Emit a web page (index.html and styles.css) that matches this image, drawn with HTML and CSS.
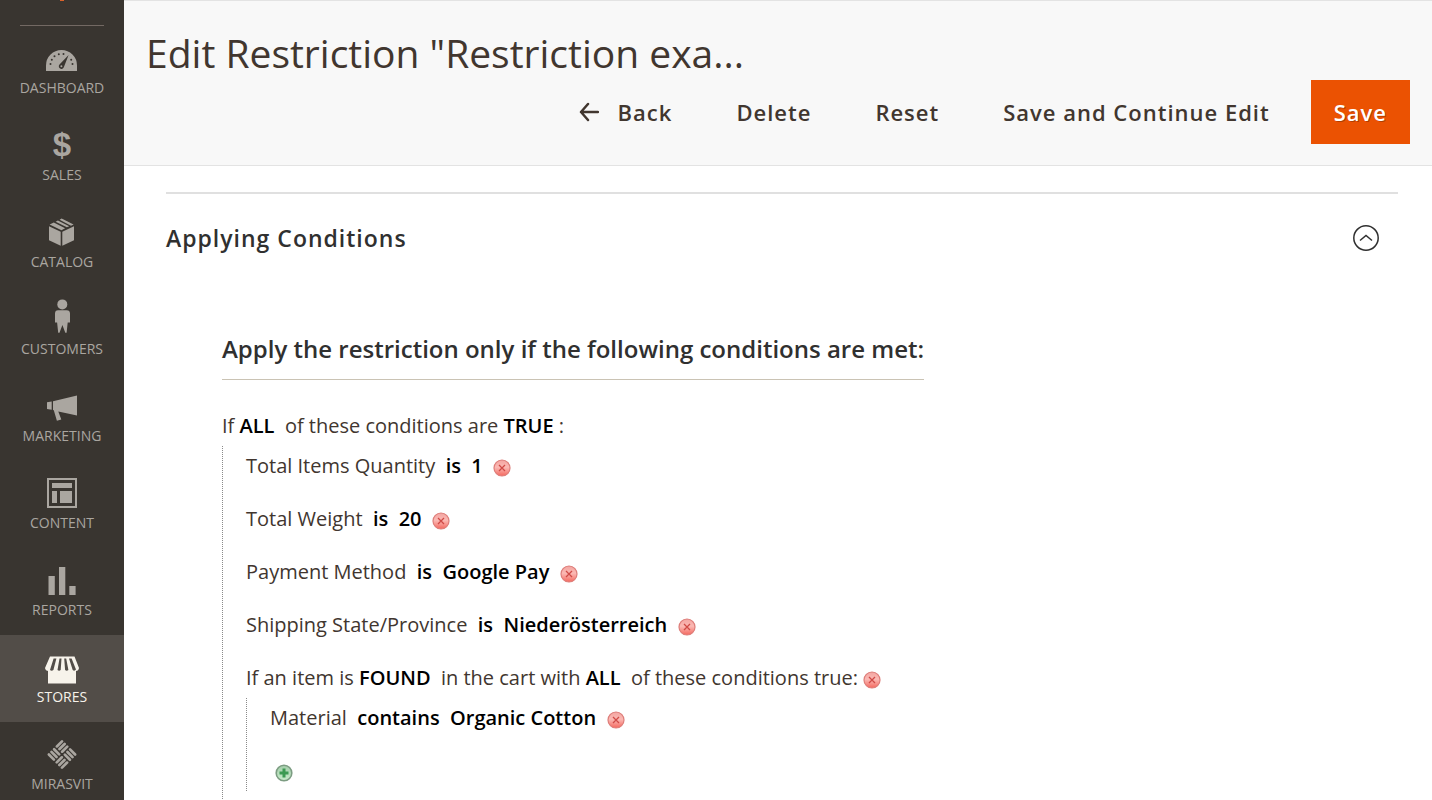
FILE: index.html
```html
<!DOCTYPE html>
<html lang="en">
<head>
    <meta charset="UTF-8">
    <meta name="viewport" content="width=device-width, initial-scale=1.0">
    <title>Edit Restriction</title>
    <link rel="stylesheet" href="styles.css">
</head>
<body>

    <!-- shared icons -->
    <svg class="sprite" aria-hidden="true">
        <defs>
            <linearGradient id="red-fill" x1="0" y1="0" x2="0" y2="1">
                <stop offset="0" stop-color="#f3a5a1"/>
                <stop offset="0.45" stop-color="#fbb9b4"/>
                <stop offset="1" stop-color="#f4685f"/>
            </linearGradient>
            <linearGradient id="green-fill" x1="0" y1="0" x2="0" y2="1">
                <stop offset="0" stop-color="#a3cdaa"/>
                <stop offset="1" stop-color="#c9eccb"/>
            </linearGradient>
        </defs>
        <symbol id="icon-remove" viewBox="0 0 18 18">
            <circle cx="9" cy="9" r="8" fill="url(#red-fill)" stroke="#dd7d79" stroke-width="1.2"/>
            <path d="M6 6l6 6M12 6l-6 6" stroke="#cf4a46" stroke-width="1.3" fill="none"/>
        </symbol>
        <symbol id="icon-add" viewBox="0 0 18 18">
            <circle cx="9" cy="9" r="7.8" fill="url(#green-fill)" stroke="#7c9c82" stroke-width="1.6"/>
            <path d="M9 4.5v9M4.5 9h9" stroke="#3c9a52" stroke-width="3" fill="none"/>
        </symbol>
    </svg>

    <div class="page">
        <nav class="menu">
            <div class="menu__logo"><span class="menu__logo-tip"></span></div>
            <a href="#" class="menu__item">
                <svg class="menu__icon" viewBox="0 0 34 40" aria-hidden="true">
                    <path d="M1 33V27.500a15.500 15.500 0 0 1 31 0V33z" fill="currentColor"/>
                    <g class="menu__cut">
                        <circle cx="5.500" cy="26" r="1"/><circle cx="6.800" cy="21.800" r="1"/><circle cx="9.500" cy="18.300" r="1"/>
                        <circle cx="13.800" cy="16.200" r="1"/><circle cx="18.500" cy="15.900" r="1"/><circle cx="26.200" cy="21.800" r="1"/><circle cx="27.500" cy="26" r="1"/>
                        <path d="M23.600 17L18.900 29a2.600 2.600 0 1 1-4.400-2.500z"/>
                    </g>
                    <circle cx="16.400" cy="28.200" r="1" fill="currentColor"/>
                </svg>
                <span class="menu__label">DASHBOARD</span>
            </a>
            <a href="#" class="menu__item">
                <svg class="menu__icon" viewBox="0 0 34 40" aria-hidden="true">
                    <text class="menu__dollar" x="17" y="31" text-anchor="middle">$</text>
                </svg>
                <span class="menu__label">SALES</span>
            </a>
            <a href="#" class="menu__item">
                <svg class="menu__icon" viewBox="0 0 34 40" aria-hidden="true">
                    <path d="M4 14.200l11.700 5.600v14L4 28.200zM17.300 19.800L29 14.200v14l-11.700 5.600z" fill="currentColor"/>
                    <path d="M4.600 12.600l4.200-2 11.300 5.600-3.600 2zM10.600 9.700l2.300-1.100 11.300 5.600-2.300 1.100zM14.600 7.700l2-1.200 12 6.100-2.600 1.200z" fill="currentColor"/>
                </svg>
                <span class="menu__label">CATALOG</span>
            </a>
            <a href="#" class="menu__item">
                <svg class="menu__icon" viewBox="0 0 34 40" aria-hidden="true">
                    <circle cx="17.300" cy="5.400" r="5" fill="currentColor"/>
                    <path d="M13 11.200h8.600q3.400 0 3.400 3.400V23.500h-2.300l-1.100 10.300h-1.300L17.400 26l-2.900 7.800h-1.300L12.100 23.500H10V14.600q0-3.400 3-3.400z" fill="currentColor"/>
                </svg>
                <span class="menu__label">CUSTOMERS</span>
            </a>
            <a href="#" class="menu__item">
                <svg class="menu__icon" viewBox="0 0 34 40" aria-hidden="true">
                    <path d="M2 16.300l4.700-.8v8.200L2 23zM8 15.200L32 9.500v20L13.300 25.600l3 7.900-4.400 1.200L8.800 24.200 8 24z" fill="currentColor"/>
                </svg>
                <span class="menu__label">MARKETING</span>
            </a>
            <a href="#" class="menu__item">
                <svg class="menu__icon" viewBox="0 0 34 40" aria-hidden="true">
                    <path d="M3 6h28v28H3z" fill="none" stroke="currentColor" stroke-width="2"/>
                    <path d="M7 10h20v5H7zM7 18h5v12H7zM15 18h12v12H15z" fill="currentColor"/>
                </svg>
                <span class="menu__label">CONTENT</span>
            </a>
            <a href="#" class="menu__item">
                <svg class="menu__icon" viewBox="0 0 34 40" aria-hidden="true">
                    <path d="M3.500 16h6.300v19H3.500zM14 7h6.300v28H14zM24.300 26h6.300v9h-6.300z" fill="currentColor"/>
                </svg>
                <span class="menu__label">REPORTS</span>
            </a>
            <a href="#" class="menu__item menu__item--active">
                <svg class="menu__icon" viewBox="0 0 34 40" aria-hidden="true">
                    <path d="M3 21h28v15.500H3zM5 9.500h24.500L34 21q-.5 3-3 3H3.500Q.5 24 0 21z" fill="currentColor"/>
                    <path class="menu__cut" d="M8.600 11.500h2.800L8.400 23q-1.800 1.500-3.400 0zM14.500 11.500h2l-.8 11.500q-1.600 1.500-3.200 0zM19.200 11.500h2l2.200 11.500q-1.700 1.500-3.300 0zM24 11.500h2.600L31 22.500q-1.500 2-3.300.5z"/>
                </svg>
                <span class="menu__label">STORES</span>
            </a>
            <a href="#" class="menu__item">
                <svg class="menu__icon" viewBox="0 0 34 40" aria-hidden="true">
                    <g transform="translate(17 20.500) rotate(45)" fill="none" stroke="currentColor" stroke-width="2.700" stroke-linecap="round">
                        <path d="M-9.300-9.300v7.200M-5.600-9.300v7.200M-1.900-9.300v7.200M1.900 2.100v7.200M5.600 2.100v7.200M9.300 2.100v7.200"/>
                        <path d="M2.100-9.300h7.200M2.100-5.600h7.200M2.100-1.900h7.200M-9.300 1.900h7.200M-9.300 5.600h7.200M-9.300 9.300h7.200"/>
                    </g>
                </svg>
                <span class="menu__label">MIRASVIT</span>
            </a>
        </nav>

        <main class="main">
            <header class="header">
                <h1 class="header__title">Edit Restriction "Restriction exa...</h1>
                <div class="header__actions">
                    <button type="button" class="button">
                        <svg class="button__arrow" viewBox="0 0 20 20" aria-hidden="true">
                            <path d="M9 2L2 10l7 8M2 10h17" fill="none" stroke="currentColor" stroke-width="2.500" stroke-linecap="round" stroke-linejoin="round"/>
                        </svg>
                        Back
                    </button>
                    <button type="button" class="button">Delete</button>
                    <button type="button" class="button">Reset</button>
                    <button type="button" class="button">Save and Continue Edit</button>
                    <button type="button" class="button button--primary">Save</button>
                </div>
            </header>

            <section class="section">
                <div class="section__head">
                    <h2 class="section__title">Applying Conditions</h2>
                    <button type="button" class="section__toggle" aria-label="Collapse">
                        <svg viewBox="0 0 28 28" aria-hidden="true">
                            <circle cx="14" cy="14" r="12.200"/>
                            <path d="M8 16.500l6-5 6 5"/>
                        </svg>
                    </button>
                </div>

                <div class="rules">
                    <h3 class="rules__legend">Apply the restriction only if the following conditions are met:</h3>
                    <div class="rules__line">If <a href="#">ALL</a>&nbsp; of these conditions are <a href="#">TRUE</a> :</div>
                    <ul class="rules__list">
                        <li class="rules__item">
                            <div class="rules__line">Total Items Quantity&nbsp; <a href="#">is</a>&nbsp; <a href="#">1</a>&nbsp; <button type="button" class="rules__button" aria-label="Remove"><svg><use href="#icon-remove"/></svg></button></div>
                        </li>
                        <li class="rules__item">
                            <div class="rules__line">Total Weight&nbsp; <a href="#">is</a>&nbsp; <a href="#">20</a>&nbsp; <button type="button" class="rules__button" aria-label="Remove"><svg><use href="#icon-remove"/></svg></button></div>
                        </li>
                        <li class="rules__item">
                            <div class="rules__line">Payment Method&nbsp; <a href="#">is</a>&nbsp; <a href="#">Google Pay</a>&nbsp; <button type="button" class="rules__button" aria-label="Remove"><svg><use href="#icon-remove"/></svg></button></div>
                        </li>
                        <li class="rules__item">
                            <div class="rules__line">Shipping State/Province&nbsp; <a href="#">is</a>&nbsp; <a href="#">Niederösterreich</a>&nbsp; <button type="button" class="rules__button" aria-label="Remove"><svg><use href="#icon-remove"/></svg></button></div>
                        </li>
                        <li class="rules__item">
                            <div class="rules__line">If an item is <a href="#">FOUND</a>&nbsp; in the cart with <a href="#">ALL</a>&nbsp; of these conditions true: <button type="button" class="rules__button" aria-label="Remove"><svg><use href="#icon-remove"/></svg></button></div>
                            <ul class="rules__list">
                                <li class="rules__item">
                                    <div class="rules__line">Material&nbsp; <a href="#">contains</a>&nbsp; <a href="#">Organic Cotton</a>&nbsp; <button type="button" class="rules__button" aria-label="Remove"><svg><use href="#icon-remove"/></svg></button></div>
                                </li>
                                <li class="rules__item">
                                    <div class="rules__line">&nbsp;<button type="button" class="rules__button" aria-label="Add"><svg><use href="#icon-add"/></svg></button></div>
                                </li>
                            </ul>
                        </li>
                    </ul>
                </div>
            </section>
        </main>
    </div>

</body>
</html>
```
FILE: styles.css
```css
* {
    box-sizing: border-box;
}

body {
    margin: 0;
    background: #fff;
    color: #41362f;
    font-family: "Open Sans", "Noto Sans", sans-serif;
    font-size: 20px;
}

h1, h2, h3, ul {
    margin: 0;
    padding: 0;
}

button {
    padding: 0;
    border: none;
    background: none;
    color: inherit;
    font-family: inherit;
    cursor: pointer;
}

.sprite {
    position: absolute;
    width: 0;
    height: 0;
}

.page {
    display: flex;
    height: 100vh;
    overflow: hidden;
}

/* menu */
.menu {
    flex: 0 0 124px;
    background: #393530;
}

.menu__logo {
    height: 26px;
    margin: 0 20px;
    border-bottom: 1px solid #736963;
}

.menu__logo-tip {
    display: block;
    width: 4px;
    height: 1px;
    margin: 0 auto;
    background: #d9622b;
}

.menu__item {
    display: flex;
    flex-direction: column;
    align-items: center;
    height: 87px;
    padding-top: 12px;
    color: #aaa6a0;
    text-decoration: none;
}

.menu__item--active {
    background: #524d48;
    color: #f7f3eb;
}

.menu__icon {
    width: 34px;
    height: 40px;
}

.menu__dollar {
    fill: currentColor;
    font-family: "Liberation Sans", sans-serif;
    font-size: 33px;
    font-weight: bold;
}

.menu__cut {
    fill: #393530;
}

.menu__item--active .menu__cut {
    fill: #524d48;
}

.menu__label {
    font-size: 14px;
    line-height: 20px;
}

/* header */
.main {
    flex: 1;
    min-width: 0;
}

.header {
    padding: 24px 22px 21px;
    border-top: 1px solid #e3e3e3;
    border-bottom: 1px solid #e3e3e3;
    background: #f8f8f8;
}

.header__title {
    font-size: 39px;
    font-weight: 400;
    line-height: 55px;
}

.header__actions {
    display: flex;
    justify-content: flex-end;
    gap: 18px;
}

.button {
    display: flex;
    align-items: center;
    gap: 19px;
    height: 64px;
    padding: 0 23px;
    font-size: 22px;
    font-weight: 600;
    letter-spacing: 1px;
}

.button--primary {
    background: #eb5202;
    color: #fff;
    text-shadow: 1px 1px 0 rgba(0, 0, 0, 0.25);
}

.button__arrow {
    width: 20px;
    height: 20px;
}

/* section */
.section {
    margin: 26px 34px 0 42px;
    border-top: 2px solid #e0e0e0;
}

.section__head {
    display: flex;
    justify-content: space-between;
    align-items: center;
    height: 88px;
    padding-right: 18px;
}

.section__title {
    color: #303030;
    font-size: 23px;
    font-weight: 600;
    letter-spacing: 1px;
}

.section__toggle svg {
    display: block;
    width: 28px;
    height: 28px;
    fill: none;
    stroke: #303030;
    stroke-width: 1.5;
}

/* conditions */
.rules {
    padding: 49px 0 0 56px;
}

.rules__legend {
    display: inline-block;
    padding-bottom: 12px;
    margin-bottom: 26px;
    border-bottom: 1px solid #cac3b4;
    color: #303030;
    font-size: 24px;
    font-weight: 600;
    line-height: 36px;
}

.rules__line {
    line-height: 40px;
}

.rules__line a {
    color: #000;
    font-weight: 600;
    text-decoration: none;
}

.rules__list {
    padding-left: 23px;
    padding-bottom: 13px;
    border-left: 1px dotted #8a8a8a;
    list-style: none;
}

.rules__item {
    margin-bottom: 13px;
}

.rules__list .rules__list {
    padding-bottom: 0;
}

.rules__list .rules__list .rules__item:last-child {
    margin-bottom: 0;
}

.rules__button {
    vertical-align: middle;
}

.rules__button svg {
    display: block;
    width: 18px;
    height: 18px;
}
```
